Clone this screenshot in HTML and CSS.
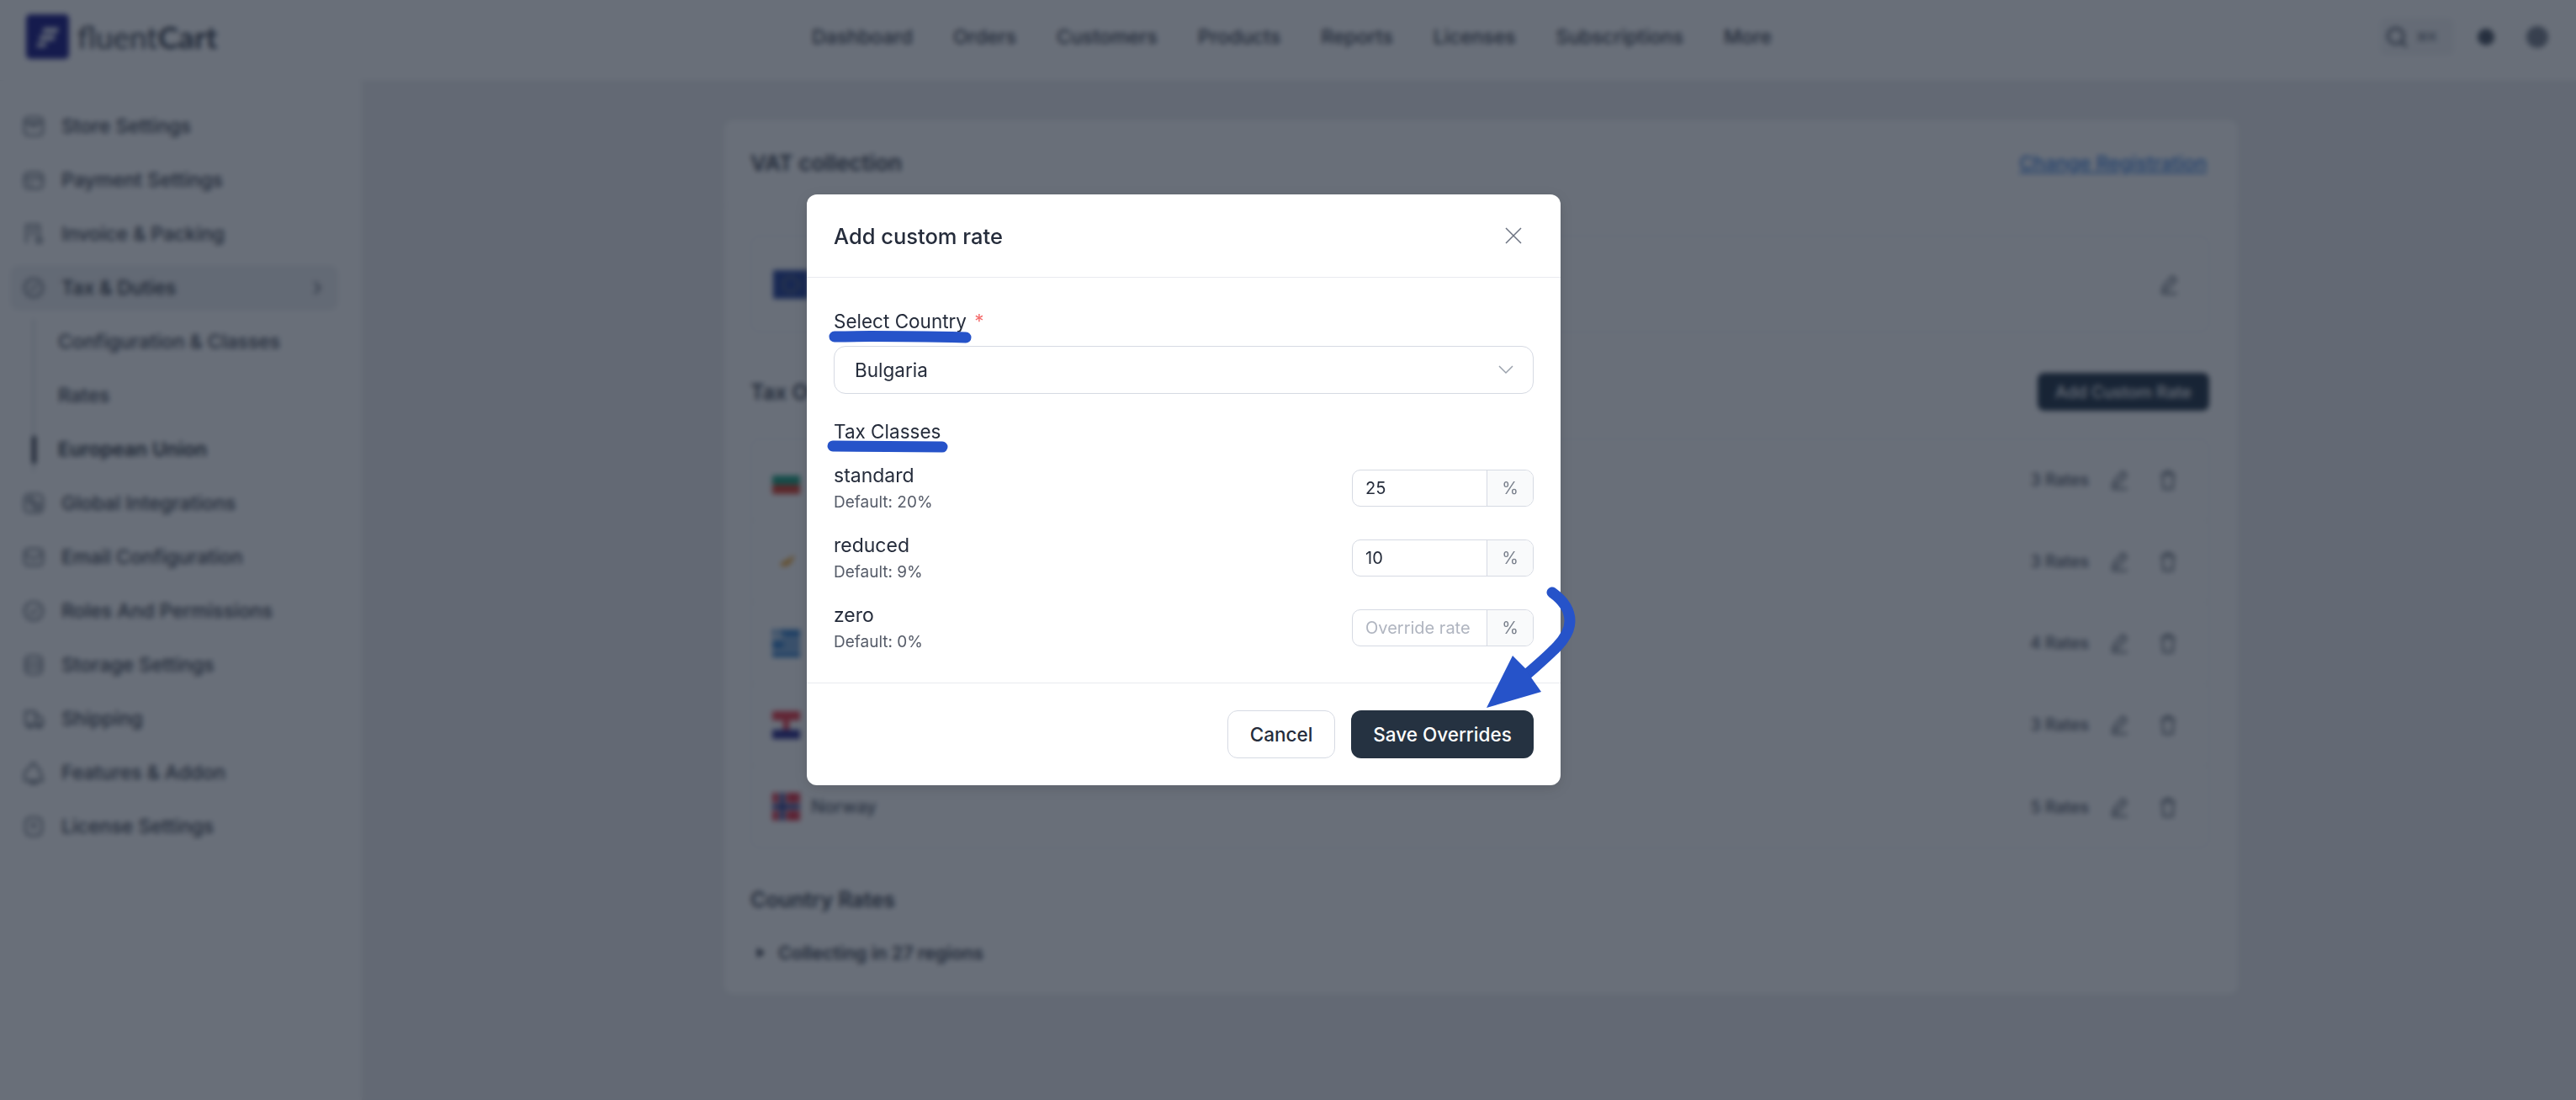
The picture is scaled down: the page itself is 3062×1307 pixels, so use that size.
FILE: index.html
```html
<!DOCTYPE html>
<html>
<head>
  <title>Add custom rate</title>
  <link rel="stylesheet" href="styles.css">
</head>
<body>
  <div class="app">
    <!-- Top bar -->
    <header class="topbar">
      <div class="logo">
        <span class="logo-mark">
          <svg width="30" height="30" viewBox="0 0 30 30"><path d="M10 4h18l-2 6H8zM6 13h18l-2 6H4zM3 22h11l-2 5H1z" fill="#eef0f8"/></svg>
        </span>
        <span class="logo-text"><span class="logo-light">fluent</span>Cart</span>
      </div>
      <nav class="topnav">
        <a>Dashboard</a>
        <a>Orders</a>
        <a>Customers</a>
        <a>Products</a>
        <a>Reports</a>
        <a>Licenses</a>
        <a>Subscriptions</a>
        <a>More</a>
      </nav>
      <div class="top-actions">
        <div class="search">
          <svg width="30" height="30" viewBox="0 0 26 26" fill="none" stroke="currentColor" stroke-width="2.4"><circle cx="12" cy="12" r="8"/><path d="M18 18l5 5"/></svg>
          <span class="kbd">⌘K</span>
        </div>
        <span class="dot-small"></span>
        <span class="dot-large"></span>
      </div>
    </header>

    <div class="layout">
      <!-- Sidebar -->
      <aside class="sidebar">
        <a class="side-item">
          <svg class="side-icon" viewBox="0 0 26 26"><rect x="3" y="3" width="20" height="20" rx="4"/><path d="M3 9h20M9 9c0 6 8 6 8 0"/></svg>
          Store Settings
        </a>
        <a class="side-item">
          <svg class="side-icon" viewBox="0 0 26 26"><rect x="3" y="5" width="20" height="17" rx="4"/><path d="M3 11h20M7 17h4"/></svg>
          Payment Settings
        </a>
        <a class="side-item">
          <svg class="side-icon" viewBox="0 0 26 26"><path d="M5 23V3h14v12M9 8h6M9 13h6"/><circle cx="19" cy="20" r="3"/></svg>
          Invoice &amp; Packing
        </a>
        <a class="side-item side-item-open">
          <svg class="side-icon" viewBox="0 0 26 26"><circle cx="13" cy="13" r="10"/><path d="M9 17l8-8M9 9h.5M17 17h.5"/></svg>
          Tax &amp; Duties
          <svg class="side-chevron" width="12" height="20" viewBox="0 0 12 20"><path d="M3 3l6 7-6 7"/></svg>
        </a>
        <div class="side-sub">
          <a class="sub-item">Configuration &amp; Classes</a>
          <a class="sub-item">Rates</a>
          <a class="sub-item sub-item-active">European Union</a>
        </div>
        <a class="side-item">
          <svg class="side-icon" viewBox="0 0 26 26"><rect x="3" y="3" width="20" height="20" rx="5"/><circle cx="10" cy="10" r="3"/><path d="M13 13h6v6h-6z"/></svg>
          Global Integrations
        </a>
        <a class="side-item">
          <svg class="side-icon" viewBox="0 0 26 26"><rect x="3" y="4" width="20" height="18" rx="4"/><path d="M3 9l10 6 10-6"/></svg>
          Email Configuration
        </a>
        <a class="side-item">
          <svg class="side-icon" viewBox="0 0 26 26"><circle cx="13" cy="13" r="10"/><path d="M9 13l3 3 5-6"/></svg>
          Roles And Permissions
        </a>
        <a class="side-item">
          <svg class="side-icon" viewBox="0 0 26 26"><rect x="4" y="3" width="18" height="20" rx="5"/><path d="M4 10h18M4 16h18"/></svg>
          Storage Settings
        </a>
        <a class="side-item">
          <svg class="side-icon" viewBox="0 0 26 26"><path d="M4 20V5h11v15M15 10h5l3 4v6H4"/><circle cx="9" cy="21" r="2"/><circle cx="19" cy="21" r="2"/></svg>
          Shipping
        </a>
        <a class="side-item">
          <svg class="side-icon" viewBox="0 0 26 26"><path d="M13 2l7 9 3 11H3v-9z"/><path d="M9 22l1 3h6l1-3"/></svg>
          Features &amp; Addon
        </a>
        <a class="side-item">
          <svg class="side-icon" viewBox="0 0 26 26"><rect x="4" y="3" width="18" height="20" rx="6"/><path d="M13 8v8M10 12h6"/></svg>
          License Settings
        </a>
      </aside>

      <!-- Main content -->
      <main class="main">
        <section class="card">
          <div class="card-head">
            <h2>VAT collection</h2>
            <a class="link">Change Registration</a>
          </div>
          <div class="card-body">
            <div class="vat-box">
              <svg class="flag-eu" viewBox="0 0 42 34"><rect width="42" height="34" fill="#0b2a8c"/><circle cx="21" cy="17" r="9" fill="none" stroke="#c9b33a" stroke-width="2" stroke-dasharray="2 3"/></svg>
              <svg class="row-icon" viewBox="0 0 22 24"><path d="M4 19l2-6L15 3l4 4-9 10zM3 22h17"/></svg>
            </div>

            <div class="section-head">
              <h3>Tax Overrides</h3>
              <button class="btn-add">Add Custom Rate</button>
            </div>

            <div class="rate-list">
              <div class="rate-row">
                <svg class="flag" viewBox="0 0 33 33"><rect width="33" height="11" fill="#fff"/><rect y="11" width="33" height="11" fill="#00966e"/><rect y="22" width="33" height="11" fill="#d62612"/></svg>
                <span class="rate-count">3 Rates</span>
                <svg class="row-icon" viewBox="0 0 22 24"><path d="M4 19l2-6L15 3l4 4-9 10zM3 22h17"/></svg>
                <svg class="row-icon" viewBox="0 0 22 24"><path d="M3 6h16M8 6V3h6v3M5 6l1 16h10l1-16"/></svg>
              </div>
              <div class="rate-row">
                <svg class="flag" viewBox="0 0 33 33"><path d="M9 20C13 15 20 14 26 8C26 15 20 22 14 22C12 22 10 21 9 20z" fill="#f09a10"/></svg>
                <span class="rate-count">3 Rates</span>
                <svg class="row-icon" viewBox="0 0 22 24"><path d="M4 19l2-6L15 3l4 4-9 10zM3 22h17"/></svg>
                <svg class="row-icon" viewBox="0 0 22 24"><path d="M3 6h16M8 6V3h6v3M5 6l1 16h10l1-16"/></svg>
              </div>
              <div class="rate-row">
                <svg class="flag" viewBox="0 0 33 33"><rect width="33" height="33" fill="#1d6fc0"/><path d="M0 11h33M13 18h20M0 25h33" stroke="#d8e4f0" stroke-width="3"/><path d="M6 0v13M0 6h13" stroke="#d8e4f0" stroke-width="3"/></svg>
                <span class="rate-count">4 Rates</span>
                <svg class="row-icon" viewBox="0 0 22 24"><path d="M4 19l2-6L15 3l4 4-9 10zM3 22h17"/></svg>
                <svg class="row-icon" viewBox="0 0 22 24"><path d="M3 6h16M8 6V3h6v3M5 6l1 16h10l1-16"/></svg>
              </div>
              <div class="rate-row">
                <svg class="flag" viewBox="0 0 33 33"><rect width="33" height="11" fill="#e8202f"/><rect y="11" width="33" height="11" fill="#fff"/><rect y="22" width="33" height="11" fill="#12127e"/><rect x="13" y="8" width="7" height="14" fill="#e8202f"/></svg>
                <span class="rate-count">3 Rates</span>
                <svg class="row-icon" viewBox="0 0 22 24"><path d="M4 19l2-6L15 3l4 4-9 10zM3 22h17"/></svg>
                <svg class="row-icon" viewBox="0 0 22 24"><path d="M3 6h16M8 6V3h6v3M5 6l1 16h10l1-16"/></svg>
              </div>
              <div class="rate-row">
                <svg class="flag" viewBox="0 0 33 33"><rect width="33" height="33" fill="#d8182e"/><path d="M12 0v33M0 16.500h33" stroke="#e6e9f0" stroke-width="9"/><path d="M12 0v33M0 16.500h33" stroke="#12207e" stroke-width="5"/></svg>
                <span class="rate-name">Norway</span>
                <span class="rate-count">5 Rates</span>
                <svg class="row-icon" viewBox="0 0 22 24"><path d="M4 19l2-6L15 3l4 4-9 10zM3 22h17"/></svg>
                <svg class="row-icon" viewBox="0 0 22 24"><path d="M3 6h16M8 6V3h6v3M5 6l1 16h10l1-16"/></svg>
              </div>
            </div>

            <h3 class="country-title">Country Rates</h3>
            <div class="collecting"><span class="caret"></span>Collecting in 27 regions</div>
          </div>
        </section>
      </main>
    </div>
  </div>

  <!-- Modal -->
  <div class="overlay">
    <div class="modal">
      <div class="modal-head">
        <h2>Add custom rate</h2>
        <svg class="modal-close" width="22" height="22" viewBox="0 0 22 22"><path d="M2 2l18 18M20 2L2 20"/></svg>
      </div>
      <div class="modal-body">
        <label class="field-label">Select Country <span class="req">*</span></label>
        <div class="select">
          <span>Bulgaria</span>
          <svg width="18" height="11" viewBox="0 0 18 11"><path d="M1 1l8 8 8-8"/></svg>
        </div>
        <div class="field-label classes-label">Tax Classes</div>

        <div class="class-row">
          <div class="class-info">
            <div class="class-name">standard</div>
            <div class="class-default">Default: 20%</div>
          </div>
          <div class="rate-input"><span class="rate-value">25</span><span class="rate-suffix">%</span></div>
        </div>
        <div class="class-row">
          <div class="class-info">
            <div class="class-name">reduced</div>
            <div class="class-default">Default: 9%</div>
          </div>
          <div class="rate-input"><span class="rate-value">10</span><span class="rate-suffix">%</span></div>
        </div>
        <div class="class-row">
          <div class="class-info">
            <div class="class-name">zero</div>
            <div class="class-default">Default: 0%</div>
          </div>
          <div class="rate-input"><span class="rate-value rate-placeholder">Override rate</span><span class="rate-suffix">%</span></div>
        </div>
      </div>
      <div class="modal-foot">
        <button class="btn btn-cancel">Cancel</button>
        <button class="btn btn-save">Save Overrides</button>
      </div>
    </div>
  </div>

  <!-- Hand drawn annotations on top of the screenshot -->
  <svg class="annotations" width="3062" height="1307" viewBox="0 0 3062 1307">
    <path class="mark" d="M992 400C1040 399 1100 400 1148 401"/>
    <path class="mark" d="M990 530C1030 530 1080 531 1120 531"/>
    <path class="mark" d="M1845 704C1859 714 1866 726 1866 738C1866 752 1856 764 1845 774C1835 784 1825 792 1814 802"/>
    <polygon class="mark-head" points="1767,841 1798,779 1813,794 1820,805 1832,822"/>
  </svg>
</body>
</html>
```

FILE: styles.css
```css
/* Global Styles */
* {
  box-sizing: border-box;
}
body {
  margin: 0;
  width: 3062px;
  height: 1307px;
  overflow: hidden;
  background-color: #ebecee;
  font-family: Inter, "Noto Sans", sans-serif;
  color: #1f2937;
  position: relative;
}
h2, h3 {
  margin: 0;
}
/* Top bar */
.topbar {
  display: flex;
  align-items: center;
  height: 96px;
  padding: 0 33px 8px 31px;
  background-color: #fff;
  border-bottom: 1px solid #f0f1f3;
}
.logo {
  display: flex;
  align-items: center;
  gap: 10px;
  width: 934px;
}
.logo-mark {
  display: flex;
  align-items: center;
  justify-content: center;
  width: 51px;
  height: 53px;
  border-radius: 5px;
  background-color: #02027a;
}
.logo-text {
  font-family: Lato, sans-serif;
  font-size: 37px;
  font-weight: 700;
  color: #1f2937;
}
.logo-light {
  font-weight: 400;
}
.topnav {
  display: flex;
  gap: 48px;
  flex: 1;
  font-size: 23px;
  font-weight: 500;
  color: #1f2937;
}
.top-actions {
  display: flex;
  align-items: center;
}
.search {
  display: flex;
  align-items: center;
  gap: 8px;
  width: 88px;
  height: 45px;
  padding-left: 5px;
  border-radius: 6px;
  background-color: #f2f3f5;
  color: #374151;
}
.kbd {
  font-size: 15px;
  font-weight: 600;
  color: #6b7280;
}
.dot-small {
  width: 20px;
  height: 20px;
  margin-left: 28px;
  border-radius: 50%;
  background-color: #374151;
}
.dot-large {
  width: 26px;
  height: 26px;
  margin-left: 38px;
  border-radius: 50%;
  background-color: #6b7280;
}
.layout {
  display: flex;
}
/* Sidebar */
.sidebar {
  width: 430px;
  height: 1211px;
  padding: 27px 28px 0 12px;
  display: flex;
  flex-direction: column;
  gap: 10px;
  background-color: #fff;
}
.side-item {
  display: flex;
  align-items: center;
  gap: 19px;
  height: 54px;
  flex-shrink: 0;
  padding: 0 19px 0 14px;
  border-radius: 10px;
  font-size: 23px;
  font-weight: 500;
  color: #1f2937;
}
.side-item-open {
  background-color: #eceef1;
  color: #111827;
}
.side-icon {
  width: 28px;
  height: 28px;
  flex-shrink: 0;
  fill: none;
  stroke: #4b5563;
  stroke-width: 2;
}
.side-chevron {
  margin-left: auto;
  fill: none;
  stroke: #374151;
  stroke-width: 2;
}
.side-sub {
  display: flex;
  flex-direction: column;
  gap: 10px;
  margin-left: 27px;
  padding-left: 28px;
  border-left: 2px solid #c9ced6;
}
.sub-item {
  position: relative;
  display: flex;
  align-items: center;
  height: 54px;
  flex-shrink: 0;
  font-size: 23px;
  font-weight: 500;
  color: #1f2937;
}
.sub-item-active {
  font-weight: 600;
  color: #111827;
}
.sub-item-active::before {
  content: "";
  position: absolute;
  left: -31px;
  top: 11px;
  width: 5px;
  height: 33px;
  border-radius: 2px;
  background-color: #111827;
}
/* Main content */
.main {
  flex: 1;
  padding: 47px 0 0 431px;
}
.card {
  width: 1799px;
  border-radius: 10px;
  background-color: #fff;
}
.card-head {
  display: flex;
  align-items: center;
  justify-content: space-between;
  height: 102px;
  padding: 0 37px 0 31px;
  border-bottom: 1px solid #eef0f2;
}
.card-head h2 {
  font-size: 26px;
  font-weight: 600;
  color: #1f2937;
}
.section-head h3,
.country-title {
  font-size: 25px;
  font-weight: 600;
  color: #1f2937;
}
.link {
  font-size: 23px;
  font-weight: 500;
  color: #1d6fd8;
  text-decoration: underline;
}
.card-body {
  padding: 35px 34px 33px 31px;
}
.vat-box {
  display: flex;
  align-items: center;
  justify-content: space-between;
  height: 115px;
  padding: 0 35px 0 26px;
  border: 1px solid #e5e7eb;
  border-radius: 10px;
}
.flag-eu {
  width: 42px;
  height: 34px;
}
.row-icon {
  width: 24px;
  height: 26px;
  fill: none;
  stroke: #4b5563;
  stroke-width: 2;
}
.section-head {
  display: flex;
  align-items: center;
  justify-content: space-between;
  height: 45px;
  margin-top: 48px;
}
.btn-add {
  width: 204px;
  height: 45px;
  border: none;
  border-radius: 8px;
  background-color: #0b1e33;
  color: #fff;
  font-family: inherit;
  font-size: 19.500px;
  font-weight: 500;
}
.rate-list {
  margin-top: 33px;
  border: 1px solid #e5e7eb;
  border-radius: 10px;
}
.rate-row {
  display: flex;
  align-items: center;
  height: 97px;
  padding: 0 36px 0 25px;
  border-bottom: 1px solid #f0f1f3;
}
.rate-row:last-child {
  border-bottom: none;
}
.flag {
  width: 33px;
  height: 33px;
  margin-right: 13px;
}
.rate-name {
  font-size: 21px;
  font-weight: 500;
  color: #374151;
}
.rate-count {
  margin-left: auto;
  margin-right: 24px;
  font-size: 19.500px;
  font-weight: 500;
  color: #374151;
}
.rate-count + .row-icon {
  margin-right: 34px;
}
.country-title {
  margin-top: 43px;
  line-height: 36px;
}
.collecting {
  display: flex;
  align-items: center;
  margin: 29px 0 0 8px;
  line-height: 32px;
  font-size: 21.500px;
  font-weight: 600;
  color: #1f2937;
}
.caret {
  width: 0;
  height: 0;
  margin-right: 16px;
  border-left: 9px solid #111827;
  border-top: 6px solid transparent;
  border-bottom: 6px solid transparent;
}
/* Modal popup */
.overlay {
  position: absolute;
  left: 0;
  top: 0;
  width: 100%;
  height: 100%;
  padding: 231px 0 0 959px;
  background-color: rgba(31, 41, 55, 0.67);
  backdrop-filter: blur(3px);
}
.modal {
  width: 896px;
  border-radius: 12px;
  background-color: #fff;
  color: #1f2937;
  box-shadow: 0 4px 16px rgba(0, 0, 0, 0.12);
}
.modal-head {
  display: flex;
  align-items: center;
  justify-content: space-between;
  height: 99px;
  padding: 0 45px 0 32px;
  border-bottom: 1px solid #e9ebef;
}
.modal-head h2 {
  font-size: 25.500px;
  font-weight: 500;
  color: #252c3b;
}
.modal-close {
  fill: none;
  stroke: #6b7280;
  stroke-width: 1.500;
}
.modal-body {
  padding: 36px 32px 30px 32px;
  border-bottom: 1px solid #e9ebef;
}
.field-label {
  display: block;
  line-height: 32px;
  font-size: 22.500px;
  color: #252c3b;
}
.req {
  margin-left: 3px;
  color: #f56c6c;
}
.select {
  display: flex;
  align-items: center;
  justify-content: space-between;
  height: 57px;
  margin-top: 13px;
  padding: 0 23px 0 24px;
  border: 1px solid #d6dae3;
  border-radius: 14px;
  font-size: 22.500px;
  color: #252c3b;
}
.select svg {
  fill: none;
  stroke: #9aa1ac;
  stroke-width: 1.500;
}
.classes-label {
  margin-top: 29px;
  margin-bottom: 20px;
}
.class-row {
  display: flex;
  justify-content: space-between;
  align-items: flex-start;
  height: 66px;
  margin-bottom: 17px;
}
.class-row:last-child {
  margin-bottom: 0;
}
.class-name {
  line-height: 32px;
  font-size: 23px;
  color: #252c3b;
}
.class-default {
  line-height: 32px;
  font-size: 19px;
  color: #565c69;
}
.rate-input {
  display: flex;
  width: 216px;
  height: 44px;
  margin-top: 9px;
  border: 1px solid #d6dae3;
  border-radius: 10px;
  overflow: hidden;
  font-size: 20px;
}
.rate-value {
  flex: 1;
  display: flex;
  align-items: center;
  padding-left: 15px;
  color: #252c3b;
}
.rate-placeholder {
  color: #b0b5c0;
}
.rate-suffix {
  display: flex;
  align-items: center;
  justify-content: center;
  width: 55px;
  border-left: 1px solid #d6dae3;
  background-color: #f9fafb;
  color: #7a808c;
}
.modal-foot {
  display: flex;
  justify-content: flex-end;
  gap: 19px;
  padding: 32px 32px 32px 0;
}
.btn {
  height: 57px;
  border-radius: 12px;
  font-family: inherit;
  font-size: 22.500px;
  font-weight: 500;
}
.btn-cancel {
  width: 128px;
  border: 1px solid #d6dae3;
  background-color: #fff;
  color: #252c3b;
}
.btn-save {
  width: 217px;
  border: none;
  background-color: #253241;
  color: #fff;
}
/* Annotations */
.annotations {
  position: absolute;
  left: 0;
  top: 0;
  pointer-events: none;
}
.mark {
  fill: none;
  stroke: #2653c9;
  stroke-width: 13;
  stroke-linecap: round;
}
.mark-head {
  fill: #2653c9;
}
```
